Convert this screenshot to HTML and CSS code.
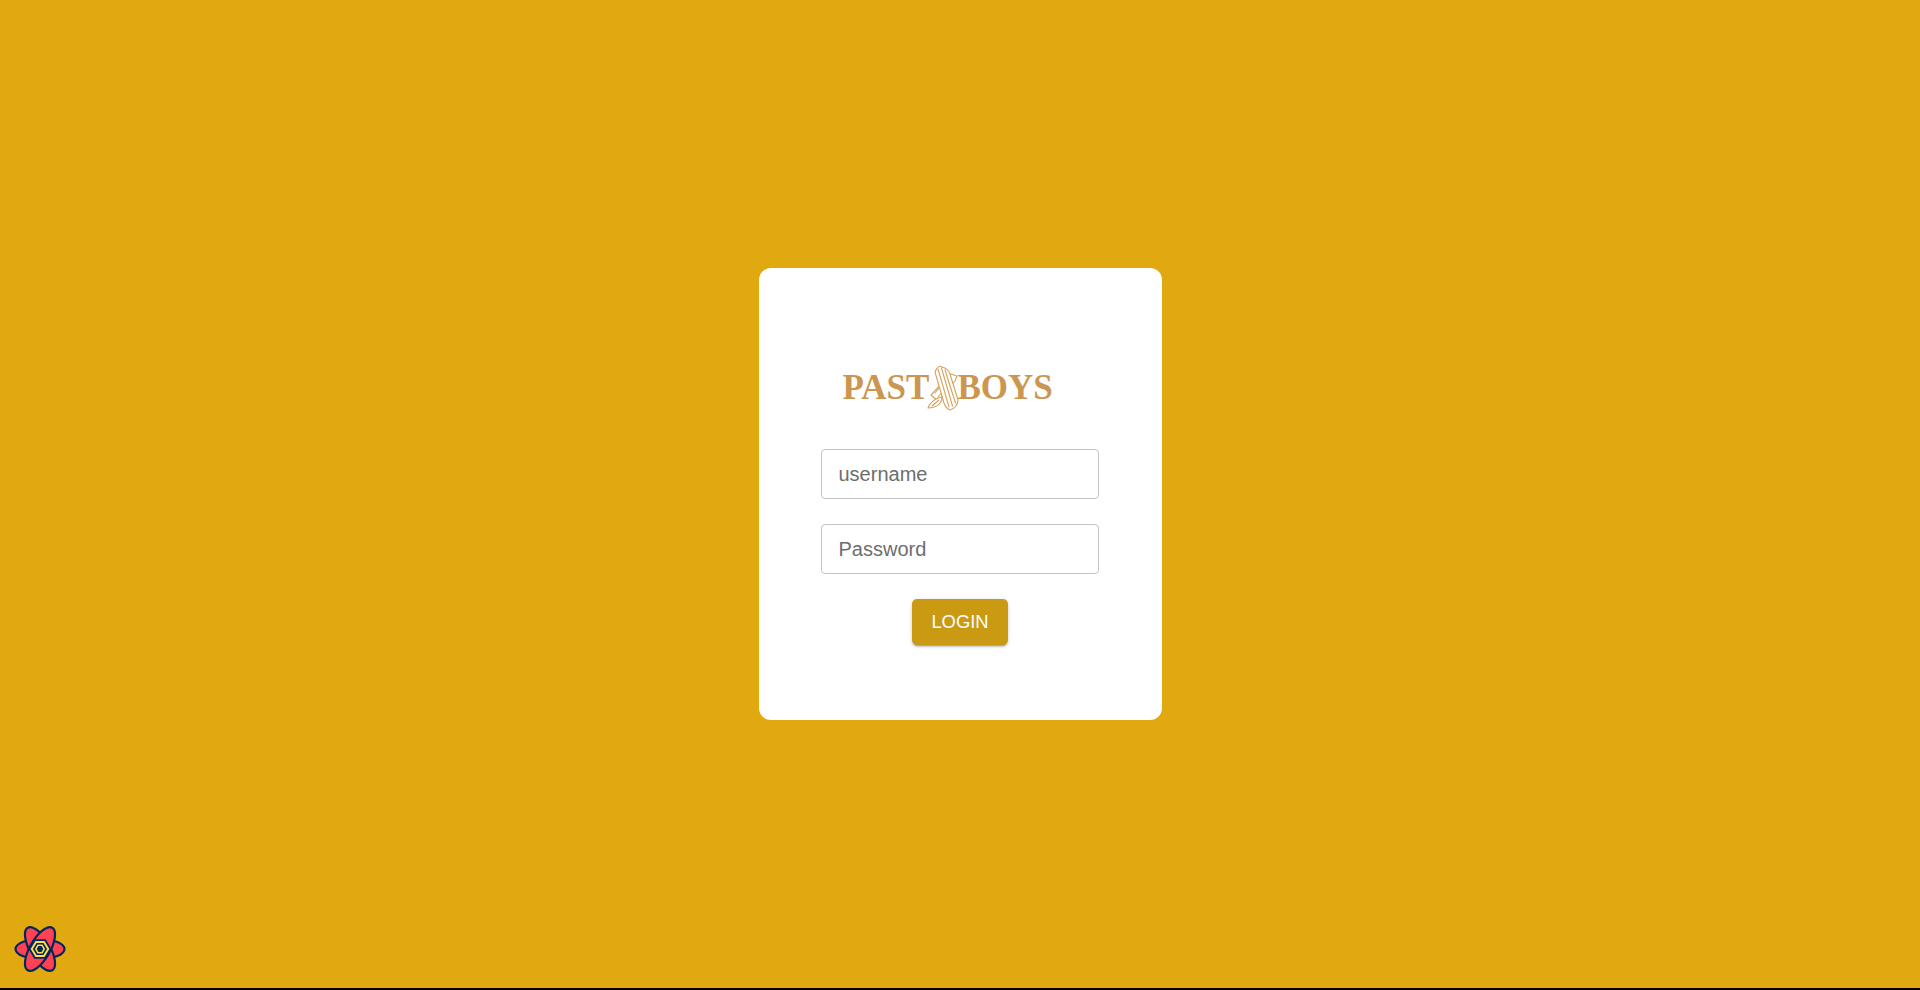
FILE: index.html
```html
<!DOCTYPE html>
<html lang="en">
<head>
<meta charset="utf-8">
<title>Login</title>
<link rel="stylesheet" href="styles.css">
</head>
<body>
<main class="page">
  <form class="card">
    <div class="logo">
      <span class="logo-word">PAST</span>
      <svg class="logo-mark" viewBox="0 0 32 46" aria-hidden="true">
        <g fill="#fff" stroke="#d6a25c" stroke-width="1.1" stroke-linejoin="round" stroke-linecap="round">
          <path d="M24 9 L30 11 L28 16 L11 36 L4 30 Z"/>
          <path d="M11 32 L24 17 M8 28 L21 13"/>
          <path d="M1 43 C3 37 9 33 15 32 C15 39 9 43 1 43Z"/>
          <path d="M5 41 L12 35"/>
          <path d="M8 7 C10 2 13 0 15 2 C19 3 22 6 23 9 L31 35 C31 40 27 44 23 45 C20 44 18 41 17 38 Z"/>
          <path d="M11 4 L22 42 M14.500 3 L25.500 41 M18 5 L28.500 38"/>
        </g>
      </svg>
      <span class="logo-word">BOYS</span>
    </div>
    <input class="field" type="text" placeholder="username">
    <input class="field" type="password" placeholder="Password">
    <button class="login" type="button">LOGIN</button>
  </form>
</main>
<button class="devtools" type="button" aria-label="Open devtools">
  <svg viewBox="0 0 52 48" width="52" height="48" aria-hidden="true">
    <g fill="#ff4154" stroke="#00275a" stroke-width="2.200" stroke-linejoin="round">
      <ellipse cx="26" cy="24" rx="24.500" ry="10"/>
      <ellipse cx="26" cy="24" rx="24.500" ry="10" transform="rotate(60 26 24)"/>
      <ellipse cx="26" cy="24" rx="24.500" ry="10" transform="rotate(120 26 24)"/>
    </g>
    <path d="M36.500 24 L31.200 33 H20.800 L15.500 24 L20.800 15 H31.200Z" fill="#00275a" stroke="#00275a" stroke-width="1.600" stroke-linejoin="round"/>
    <path d="M34.200 24 L30 31 H22 L17.800 24 L22 17 H30Z" fill="none" stroke="#ffd94c" stroke-width="2"/>
    <path d="M30.200 24 L28 27.800 H24 L21.800 24 L24 20.200 H28Z" fill="none" stroke="#ffd94c" stroke-width="1.600"/>
  </svg>
</button>
</body>
</html>
```
FILE: styles.css
```css
* { box-sizing: border-box; }

html, body {
  margin: 0;
  height: 100%;
}

body {
  background: #000;
  font-family: "Liberation Sans", Arial, sans-serif;
  overflow: hidden;
}

.page {
  height: 988px;
  background: #e0a90f;
  display: flex;
  align-items: center;
  justify-content: center;
}

.card {
  width: 403px;
  height: 452px;
  padding: 96px 62px 0;
  background: #fff;
  border-radius: 12px;
  display: flex;
  flex-direction: column;
  align-items: center;
}

.logo {
  width: 210px;
  height: 48px;
  margin: 0 0 37px -25px;
  display: flex;
  align-items: center;
  justify-content: space-between;
  color: #cc9650;
  font-family: "Liberation Serif", "Times New Roman", serif;
  font-weight: 700;
  font-size: 35px;
  line-height: 48px;
}

.logo-word {
  display: block;
  flex: none;
}

.logo-mark {
  flex: none;
  width: 32px;
  height: 46px;
  margin: 0 -2px;
}

.field {
  display: block;
  flex: none;
  width: 278px;
  height: 50px;
  padding: 0 16.500px;
  margin: 0 0 25px;
  background: #fff;
  border: 1px solid #c4c4c4;
  border-radius: 4px;
  font: 400 20px "Liberation Sans", Arial, sans-serif;
  color: #333;
  outline: none;
}

.field::placeholder {
  color: #6d6d6d;
  opacity: 1;
}

.login {
  flex: none;
  width: 96px;
  height: 46px;
  padding: 0;
  background: #c99a12;
  border: 0;
  border-radius: 5px;
  box-shadow: 0 3px 1px -2px rgba(0,0,0,.2), 0 2px 2px 0 rgba(0,0,0,.14), 0 1px 5px 0 rgba(0,0,0,.12);
  color: #fff;
  font: 400 18.400px "Liberation Sans", Arial, sans-serif;
  cursor: pointer;
}

.devtools {
  position: fixed;
  left: 14px;
  bottom: 17px;
  width: 52px;
  height: 48px;
  padding: 0;
  background: none;
  border: 0;
  line-height: 0;
}
```
